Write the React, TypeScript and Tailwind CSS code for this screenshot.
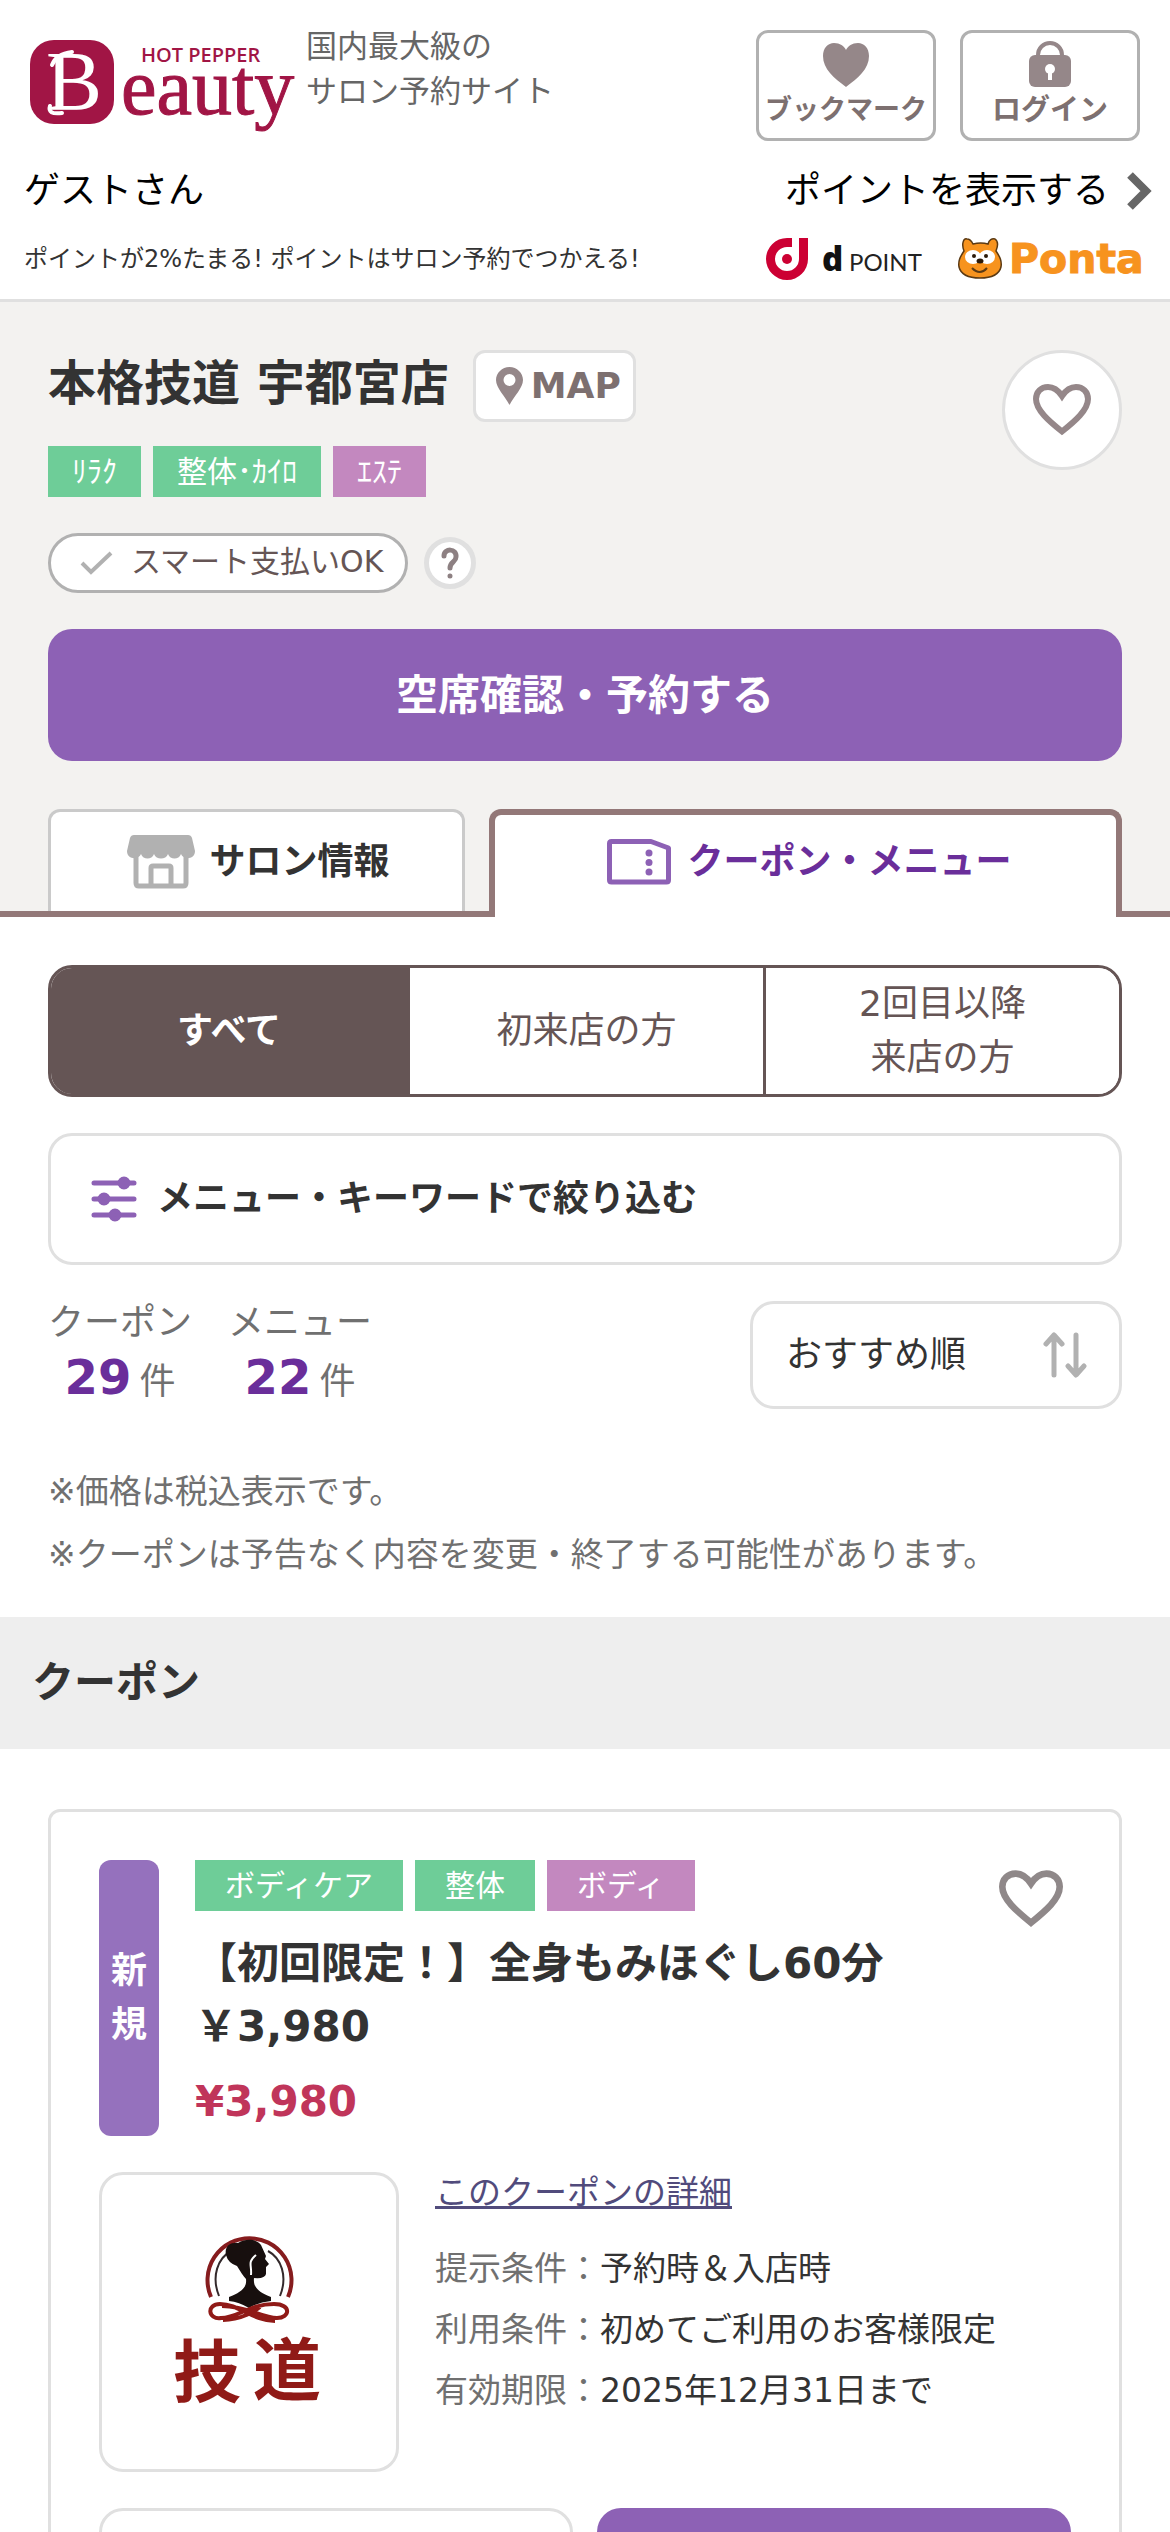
import { useState } from "react";

type Tag = { label: string; tone: "green" | "pink" };

const salonTags: Tag[] = [
    { label: "ﾘﾗｸ", tone: "green" },
    { label: "整体･ｶｲﾛ", tone: "green" },
    { label: "ｴｽﾃ", tone: "pink" },
];

const couponTags: Tag[] = [
    { label: "ボディケア", tone: "green" },
    { label: "整体", tone: "green" },
    { label: "ボディ", tone: "pink" },
];

const visitTypes = [
    { id: "all", lines: ["すべて"] },
    { id: "first", lines: ["初来店の方"] },
    { id: "repeat", lines: ["2回目以降", "来店の方"] },
];

const counts = [
    { label: "クーポン", value: 29 },
    { label: "メニュー", value: 22 },
];

const conditions = [
    { label: "提示条件：", value: "予約時＆入店時" },
    { label: "利用条件：", value: "初めてご利用のお客様限定" },
    { label: "有効期限：", value: "2025年12月31日まで" },
];

function BeautyLogo() {
    return (
        <svg viewBox="0 0 270 90" className="h-[90px] w-[270px] overflow-visible" role="img" aria-label="HOT PEPPER Beauty">
            <rect x="0" y="2" width="84" height="84" rx="24" fill="#a11545" />
            <text x="16" y="72" fontFamily="Liberation Serif" fontSize="84" fill="#fff">B</text>
            <path d="M22 27q4-11 20-13M20 68q-3 9 12 7" fill="none" stroke="#fff" strokeWidth="4" strokeLinecap="round" />
            <text x="111" y="24" fontFamily="Open Sans" fontWeight="600" fontSize="20" fill="#a11545">HOT PEPPER</text>
            <text x="91" y="76" fontFamily="Liberation Serif" fontSize="80" fill="#a11545" stroke="#a11545" strokeWidth="1">eauty</text>
        </svg>
    );
}

function HeartOutline({ className }: { className: string }) {
    return (
        <svg viewBox="0 0 58 52" className={className} fill="none" stroke="currentColor" strokeWidth="6" aria-hidden="true">
            <path d="M29 47.500C16 37 3 26 3 15 3 8 8 3 15 3c6 0 10 3 14 9C33 6 37 3 43 3c7 0 12 5 12 12 0 11-13 22-26 32.500Z" />
        </svg>
    );
}

function StoreIcon() {
    return (
        <svg viewBox="0 0 68 54" className="h-[54px] w-[68px]" fill="#b1b1b1" aria-hidden="true">
            <path d="M7 0h54q3 0 4 3l3 13c0 9-12 9-14 3-2 6-11 6-13 0-2 6-12 6-14 0-2 6-11 6-13 0C12 25 0 25 0 16L3 3q1-3 4-3Z" />
            <path d="M9 20v28q0 3 3 3h44q3 0 3-3V20M24 51V33q0-2 2-2h16q2 0 2 2v18" fill="none" stroke="#b1b1b1" strokeWidth="5" />
        </svg>
    );
}

function TicketIcon() {
    return (
        <svg viewBox="0 0 64 46" className="h-[46px] w-[64px]" aria-hidden="true">
            <path d="M4.500 2.500H44L61.500 9v32q0 2-2 2h-55q-2 0-2-2V4.500q0-2 2-2Z" fill="none" stroke="#8d61b5" strokeWidth="5" strokeLinejoin="round" />
            <g fill="#8d61b5">
                <circle cx="42" cy="14" r="3.500" />
                <circle cx="42" cy="23.500" r="3.500" />
                <circle cx="42" cy="33" r="3.500" />
            </g>
        </svg>
    );
}

function DPoint() {
    return (
        <svg viewBox="0 0 158 44" className="h-11 w-[158px] overflow-visible" role="img" aria-label="d POINT">
            <path d="M42 1v21a21 21 0 1 1-21-21h5v9h-5a12 12 0 1 0 12 12V1Z" fill="#cc0033" />
            <circle cx="21" cy="22" r="5" fill="#cc0033" />
            <text x="56" y="34" fontFamily="Open Sans" fontWeight="800" fontSize="33" fill="#111">d</text>
            <text x="83" y="34" fontFamily="Lato" fontSize="24" fill="#222">POINT</text>
        </svg>
    );
}

function Ponta() {
    return (
        <svg viewBox="0 0 188 44" className="h-11 w-[188px] overflow-visible" role="img" aria-label="Ponta">
            <path d="M6 14C3 6 6 1 9 2c3 0 5 3 6 5q8-2 15 0c1-4 4-6 7-5 3 2 3 7 1 12 4 6 6 10 5 16-2 8-10 11-21 11S3 38 1 30c-1-6 1-10 5-16Z" fill="#f7931e" stroke="#5b3a14" strokeWidth="1.500" />
            <ellipse cx="15" cy="20" rx="8" ry="7" fill="#fff" />
            <ellipse cx="29" cy="20" rx="8" ry="7" fill="#fff" />
            <path d="M14 31q8 8 15 0" fill="none" stroke="#5b3a14" strokeWidth="2" />
            <g fill="#2b1a0a">
                <circle cx="16" cy="19" r="2" />
                <circle cx="28" cy="19" r="2" />
                <ellipse cx="22" cy="24" rx="3.500" ry="2.500" />
            </g>
            <text x="51" y="36" fontFamily="DejaVu Sans" fontWeight="700" fontSize="41" fill="#f7931e" stroke="#f7931e" strokeWidth="1">Ponta</text>
        </svg>
    );
}

function SalonEmblem() {
    return (
        <svg viewBox="0 0 294 294" className="size-full" role="img" aria-label="技道">
            <path d="M109 122a42 42 0 1 1 77 0" fill="none" stroke="#861c1e" strokeWidth="4" />
            <path d="M117 121c-8-20-1-38 12-45M178 121c8-20 1-38-12-45" fill="none" stroke="#33292b" strokeWidth="2" />
            <path d="M124 80c-2-9 5-13 12-12 8-5 19-4 23 2l5 11-1 3 4 5-3 3v7q-1 5-12 4c-1 9 4 14 17 19v4q-12 1-22 7-10-6-20-7v-4c13-5 18-10 17-18-3-3-5-7-9-13q-9-3-11-11Z" fill="#170f0e" />
            <path d="M154 80c-9 8-4 9-5 20" fill="none" stroke="#fff" strokeWidth="2" />
            <path d="M173 146c-22 0-36-17-55-17-14 0-12 16 1 14 17 0 28-14 53-14 18 0 16 14 3 14-15 0-30-12-55-12M121 145c18 0 32-9 37-13" fill="none" stroke="#901a17" strokeWidth="4" />
            <text x="71" y="222" fontFamily="Noto Sans CJK JP" fontWeight="700" fontSize="68" fill="#901a17">技</text>
            <text x="151" y="220" fontFamily="Noto Sans CJK JP" fontWeight="700" fontSize="68" fill="#901a17">道</text>
        </svg>
    );
}

function TagList({ tags, wide }: { tags: Tag[]; wide?: boolean }) {
    return (
        <ul className="flex gap-3 text-[30px] leading-[51px] text-white">
            {tags.map((t) => (
                <li
                    key={t.label}
                    className={`${wide ? "px-[30px]" : "px-6"} ${t.tone === "green" ? "bg-[#6ecd98]" : "bg-[#c388bf]"}`}
                >
                    {t.label}
                </li>
            ))}
        </ul>
    );
}

function Header() {
    return (
        <header className="border-b-[3px] border-[#e0e0e0] pb-[18px]">
            <div className="flex items-start justify-between px-[30px] pt-[30px]">
                <div className="flex">
                    <a href="#" className="pt-2">
                        <BeautyLogo />
                    </a>
                    <p className="-mt-1.5 ml-1.5 text-[31px] leading-[45px] text-[#666]">
                        国内最大級の
                        <br />
                        サロン予約サイト
                    </p>
                </div>
                <div className="flex gap-6 font-bold text-[#7d7070]">
                    <a href="#" className="flex h-[111px] w-[180px] flex-col items-center rounded-xl border-[3px] border-[#b1b1b1] text-[27px] leading-[38px]">
                        <span className="flex h-[58px] items-center pt-1">
                            <svg viewBox="0 0 46 45" className="h-[45px] w-[46px]" fill="#958789" aria-hidden="true">
                                <path d="M23 45C11 36 0 27 0 14 0 6 5 1 11 1c6 0 10 3 12 7 2-4 6-7 12-7 6 0 11 5 11 13 0 13-11 22-23 31Z" />
                            </svg>
                        </span>
                        ブックマーク
                    </a>
                    <a href="#" className="flex h-[111px] w-[180px] flex-col items-center rounded-xl border-[3px] border-[#b1b1b1] text-[29px] leading-[38px]">
                        <span className="flex h-[58px] items-center pt-1">
                            <svg viewBox="0 0 42 46" className="h-[46px] w-[42px]" aria-hidden="true">
                                <path d="M9 17v-3a12 12 0 0 1 24 0v3" fill="none" stroke="#958789" strokeWidth="4" />
                                <rect y="14" width="42" height="32" rx="6" fill="#958789" />
                                <circle cx="21" cy="28" r="5" fill="#fff" />
                                <path d="M21 28v11" stroke="#fff" strokeWidth="4" />
                            </svg>
                        </span>
                        ログイン
                    </a>
                </div>
            </div>
            <div className="mt-[23px] flex items-center justify-between pr-[18px] pl-6 text-[36px] leading-[54px] text-black">
                <p>ゲストさん</p>
                <a href="#" className="flex items-center gap-[18px]">
                    ポイントを表示する
                    <svg viewBox="0 0 25 38" className="h-[38px] w-[25px]" fill="none" stroke="#666" strokeWidth="8" aria-hidden="true">
                        <path d="M3 3l16 16L3 35" />
                    </svg>
                </a>
            </div>
            <div className="mt-[19px] flex items-center justify-between px-6">
                <p className="text-[24px] leading-[42px] text-[#333]">ポイントが2%たまる! ポイントはサロン予約でつかえる!</p>
                <div className="flex gap-[34px]">
                    <DPoint />
                    <Ponta />
                </div>
            </div>
        </header>
    );
}

function SalonHead() {
    return (
        <section className="bg-[#f3f2f0] pt-12">
            <div className="px-12">
                <div className="flex items-start justify-between">
                    <div>
                        <div className="flex items-start gap-6">
                            <h1 className="text-5xl leading-[66px] font-bold">本格技道 宇都宮店</h1>
                            <a href="#" className="flex h-[72px] items-center gap-2 rounded-xl border-[3px] border-[#e0e0e0] bg-white pr-3 pl-5 text-[36px] font-bold text-[#7d7070]">
                                <svg viewBox="0 0 27 38" className="h-[38px] w-[27px]" fill="#958789" fillRule="evenodd" aria-hidden="true">
                                    <path d="M13.500 0C21 0 27 6 27 13c0 8-9 16-13.500 25C9 29 0 21 0 13 0 6 6 0 13.500 0Zm0 7a6 6 0 1 0 0 12 6 6 0 0 0 0-12Z" />
                                </svg>
                                MAP
                            </a>
                        </div>
                        <div className="mt-6">
                            <TagList tags={salonTags} />
                        </div>
                        <div className="mt-9 flex items-center gap-4">
                            <p className="flex h-[60px] items-center gap-[18px] rounded-full border-[3px] border-[#b1b1b1] bg-white pr-[22px] pb-1 pl-[29px] text-[30px] text-[#655555]">
                                <svg viewBox="0 0 33 26" className="mt-1 h-[26px] w-[33px]" fill="none" stroke="#b1b1b1" strokeWidth="4" aria-hidden="true">
                                    <path d="M2 13l9 9L31 3" />
                                </svg>
                                スマート支払いOK
                            </p>
                            <button
                                type="button"
                                aria-label="スマート支払いとは"
                                className="flex size-[52px] items-center justify-center rounded-full border-[5px] border-[#e0e0e0] bg-white text-[#8d8082]"
                            >
                                <svg viewBox="0 0 18 32" className="h-8 w-[18px]" fill="none" stroke="currentColor" strokeWidth="5" strokeLinecap="round" aria-hidden="true">
                                    <path d="M3 9c0-8 13-8 12 1 0 5-6 5-6 11M9 29v.100" />
                                </svg>
                            </button>
                        </div>
                    </div>
                    <button
                        type="button"
                        aria-label="ブックマークに追加"
                        className="flex size-[120px] items-center justify-center rounded-full border-[3px] border-[#e0e0e0] bg-white text-[#958789]"
                    >
                        <HeartOutline className="h-[52px] w-[58px]" />
                    </button>
                </div>
                <button type="button" className="mt-9 h-[132px] w-full rounded-3xl bg-[#8d61b5] text-[42px] font-bold text-white">
                    空席確認・予約する
                </button>
            </div>
            <nav className="mt-12 flex gap-6 border-b-[6px] border-[#937878] px-12 text-[36px] font-bold">
                <a href="#" className="flex h-[102px] w-[417px] items-center justify-center gap-[14px] rounded-t-xl border-[3px] border-b-0 border-[#cacaca] bg-white pl-1">
                    <StoreIcon />
                    サロン情報
                </a>
                <a
                    href="#"
                    aria-current="page"
                    className="-mb-[6px] flex h-[108px] flex-1 items-center justify-center gap-4 rounded-t-xl border-[6px] border-b-0 border-[#937878] bg-white pb-2 pl-2 text-[#6a2e9a]"
                >
                    <TicketIcon />
                    クーポン・メニュー
                </a>
            </nav>
        </section>
    );
}

function CouponCard() {
    return (
        <article className="mx-12 mt-[60px] rounded-xl border-[3px] border-[#e0e0e0] px-12 pt-12 pb-12">
            <div className="flex gap-9">
                <div className="flex w-[60px] flex-col items-center justify-center rounded-xl bg-[#9571bd] text-[36px] leading-[54px] font-bold text-white">
                    <span>新</span>
                    <span>規</span>
                </div>
                <div className="flex-1 pb-[3px]">
                    <TagList tags={couponTags} wide />
                    <h3 className="mt-[21px] text-[42px] leading-[63px] font-bold">
                        【初回限定！】全身もみほぐし60分
                        <br />
                        ￥3,980
                    </h3>
                    <p className="mt-3 text-[42px] leading-[63px] font-bold text-[#c0355a]">¥3,980</p>
                </div>
                <button type="button" aria-label="クーポンをブックマーク" className="mt-2.5 mr-2 self-start text-[#8f8889]">
                    <HeartOutline className="h-[58px] w-[64px]" />
                </button>
            </div>
            <div className="mt-9 flex gap-9">
                <div className="size-[300px] overflow-hidden rounded-3xl border-[3px] border-[#e0e0e0]">
                    <SalonEmblem />
                </div>
                <div className="flex-1 text-[33px]">
                    <a href="#" className="block leading-[42px] text-[#514b7c] underline">
                        このクーポンの詳細
                    </a>
                    <dl className="mt-6 leading-[61px]">
                        {conditions.map((c) => (
                            <div key={c.label} className="flex">
                                <dt className="text-[#707070]">{c.label}</dt>
                                <dd>{c.value}</dd>
                            </div>
                        ))}
                    </dl>
                </div>
            </div>
            <div className="mt-9 grid grid-cols-2 gap-6">
                <button type="button" aria-label="メニューを追加" className="h-[120px] rounded-3xl border-[3px] border-[#e0e0e0]" />
                <button type="button" aria-label="空席確認・予約する" className="h-[120px] rounded-3xl bg-[#8d61b5]" />
            </div>
        </article>
    );
}

export default function App() {
    const [visit, setVisit] = useState("all");
    const [sort, setSort] = useState("recommend");

    return (
        <div className="h-screen overflow-hidden bg-white font-['DejaVu_Sans','Noto_Sans_CJK_JP',sans-serif] text-[#333]" lang="ja">
            <Header />
            <main>
                <SalonHead />

                <section className="px-12 pt-12">
                    <div className="grid h-[132px] grid-cols-3 overflow-hidden rounded-3xl border-[3px] border-[#655555] text-[36px] leading-[54px]">
                        {visitTypes.map((v) => (
                            <button
                                key={v.id}
                                type="button"
                                aria-pressed={visit === v.id}
                                onClick={() => setVisit(v.id)}
                                className={`border-l-[3px] border-[#655555] first:border-l-0 ${visit === v.id ? "bg-[#655555] font-bold text-white" : "bg-white text-[#655555]"}`}
                            >
                                {v.lines.map((line) => (
                                    <span key={line} className="block">{line}</span>
                                ))}
                            </button>
                        ))}
                    </div>

                    <button type="button" className="mt-9 flex h-[132px] w-full items-center gap-5 rounded-3xl border-[3px] border-[#e0e0e0] px-10 text-[36px] font-bold">
                        <svg viewBox="0 0 46 46" className="size-[46px]" fill="#8d61b5" stroke="#8d61b5" strokeWidth="5" strokeLinecap="round" aria-hidden="true">
                            <path d="M3 7h40M3 23h40M3 39h40" />
                            <circle cx="33" cy="7" r="4" />
                            <circle cx="13" cy="23" r="4" />
                            <circle cx="24" cy="39" r="4" />
                        </svg>
                        メニュー・キーワードで絞り込む
                    </button>

                    <div className="mt-9 flex items-start justify-between">
                        <dl className="flex gap-9 text-center text-[36px] text-[#707070]">
                            {counts.map((c) => (
                                <div key={c.label}>
                                    <dt className="leading-[44px]">{c.label}</dt>
                                    <dd className="flex items-baseline justify-center gap-2 leading-[64px]">
                                        <strong className="text-5xl leading-[64px] font-bold text-[#6a2e9a]">{c.value}</strong>
                                        件
                                    </dd>
                                </div>
                            ))}
                        </dl>
                        <div className="relative w-[372px]">
                            <select
                                aria-label="並び順"
                                value={sort}
                                onChange={(e) => setSort(e.target.value)}
                                className="h-[108px] w-full appearance-none rounded-3xl border-[3px] border-[#e0e0e0] bg-white pr-24 pl-[33px] text-[36px]"
                            >
                                <option value="recommend">おすすめ順</option>
                                <option value="price">価格が安い順</option>
                            </select>
                            <svg
                                viewBox="0 0 44 46"
                                className="pointer-events-none absolute top-[31px] right-[35px] h-[46px] w-[44px]"
                                fill="none"
                                stroke="#b1b1b1"
                                strokeWidth="5"
                                strokeLinecap="round"
                                strokeLinejoin="round"
                                aria-hidden="true"
                            >
                                <path d="M11 43V4M3 12l8-9 8 9M33 3v39M25 34l8 9 8-9" />
                            </svg>
                        </div>
                    </div>

                    <div className="mt-[46px] pb-[31px] text-[33px] leading-[63px] text-[#707070]">
                        <p>※価格は税込表示です。</p>
                        <p>※クーポンは予告なく内容を変更・終了する可能性があります。</p>
                    </div>
                </section>

                <h2 className="bg-[#eee] px-8 text-[42px] leading-[132px] font-bold">クーポン</h2>
                <CouponCard />
            </main>
        </div>
    );
}
